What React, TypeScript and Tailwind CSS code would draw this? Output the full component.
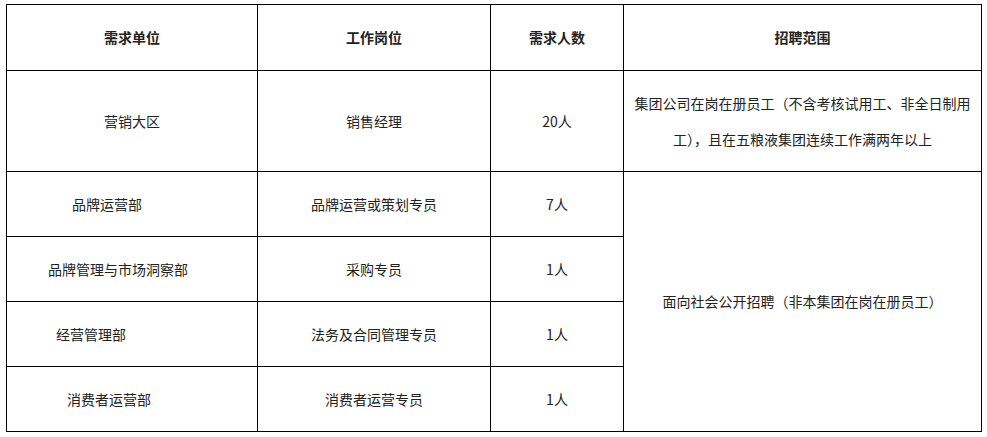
const rows = [
  { unit: "品牌运营部", pad: "pl-[65px]", job: "品牌运营或策划专员", num: "7人" },
  { unit: "品牌管理与市场洞察部", pad: "pl-[41px]", job: "采购专员", num: "1人" },
  { unit: "经营管理部", pad: "pl-[49px]", job: "法务及合同管理专员", num: "1人" },
  { unit: "消费者运营部", pad: "pl-[60px]", job: "消费者运营专员", num: "1人" },
];

export default function App() {
  return (
    <div className="min-h-screen bg-white pl-[6px] pt-[4px] font-['Microsoft_YaHei','Noto_Sans_CJK_SC',sans-serif] text-[14px] text-[#222]">
      <table className="table-fixed border-collapse">
        <colgroup>
          <col className="w-[251px]" />
          <col className="w-[233px]" />
          <col className="w-[133px]" />
          <col className="w-[358px]" />
        </colgroup>
        <thead>
          <tr className="h-[66px]">
            <th className="border border-black text-center font-bold">需求单位</th>
            <th className="border border-black text-center font-bold">工作岗位</th>
            <th className="border border-black text-center font-bold">需求人数</th>
            <th className="border border-black text-center font-bold">招聘范围</th>
          </tr>
        </thead>
        <tbody>
          <tr className="h-[101px]">
            <td className="border border-black text-center">营销大区</td>
            <td className="border border-black text-center">销售经理</td>
            <td className="border border-black text-center">20人</td>
            <td className="border border-black px-[10px] text-center leading-[36px]">
              集团公司在岗在册员工（不含考核试用工、非全日制用工），且在五粮液集团连续工作满两年以上
            </td>
          </tr>
          {rows.map((r, i) => (
            <tr key={r.unit} className="h-[65px]">
              <td className={`border border-black text-left ${r.pad}`}>{r.unit}</td>
              <td className="border border-black text-center">{r.job}</td>
              <td className="border border-black text-center">{r.num}</td>
              {i === 0 && (
                <td rowSpan={4} className="border border-black text-center">
                  面向社会公开招聘（非本集团在岗在册员工）
                </td>
              )}
            </tr>
          ))}
        </tbody>
      </table>
    </div>
  );
}
